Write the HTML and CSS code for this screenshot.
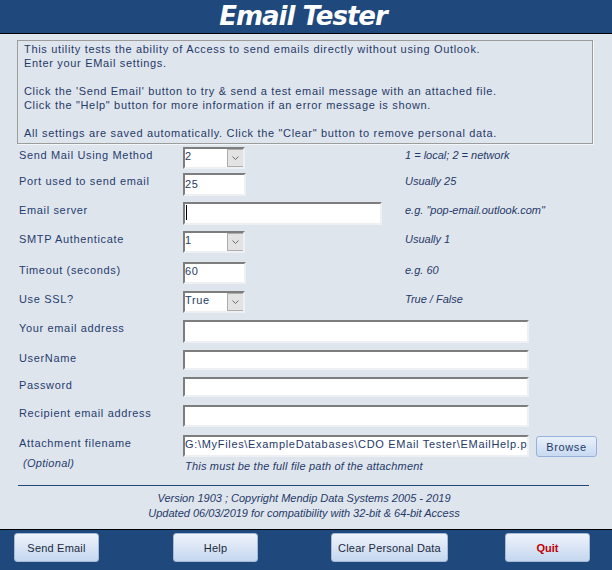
FILE: index.html
```html
<!DOCTYPE html>
<html>
<head>
<meta charset="utf-8">
<title>Email Tester</title>
<link rel="stylesheet" href="styles.css">
</head>
<body>
<div class="win">
  <header class="hdr"><h1 class="title">Email Tester</h1></header>
  <main class="main">
    <div class="info">
      <div class="ln">This utility tests the ability of Access to send emails directly without using Outlook.</div>
      <div class="ln">Enter your EMail settings.</div>
      <div class="ln blank"></div>
      <div class="ln">Click the 'Send Email' button to try &amp; send a test email message with an attached file.</div>
      <div class="ln">Click the "Help" button for more information if an error message is shown.</div>
      <div class="ln blank"></div>
      <div class="ln">All settings are saved automatically. Click the "Clear" button to remove personal data.</div>
    </div>

    <div class="form">
      <div class="lbl">Send Mail Using Method</div>
      <div class="box combo h22"><span class="val">2</span><span class="arrow"><svg width="7" height="4" viewBox="0 0 7 4"><polyline points="0.5,0.5 3.5,3.5 6.5,0.5" fill="none" stroke="#6b6b6b" stroke-width="1"/></svg></span></div>
      <div class="hint">1 = local; 2 = network</div>

      <div class="lbl">Port used to send email</div>
      <div class="box short h23"><span class="val v2">25</span></div>
      <div class="hint">Usually 25</div>

      <div class="lbl">Email server</div>
      <div class="box mid h23"><span class="caret"></span></div>
      <div class="hint">e.g. "pop-email.outlook.com"</div>

      <div class="lbl">SMTP Authenticate</div>
      <div class="box combo h22"><span class="val">1</span><span class="arrow"><svg width="7" height="4" viewBox="0 0 7 4"><polyline points="0.5,0.5 3.5,3.5 6.5,0.5" fill="none" stroke="#6b6b6b" stroke-width="1"/></svg></span></div>
      <div class="hint">Usually 1</div>

      <div class="lbl">Timeout (seconds)</div>
      <div class="box short h22"><span class="val">60</span></div>
      <div class="hint">e.g. 60</div>

      <div class="lbl">Use SSL?</div>
      <div class="box combo h22"><span class="val">True</span><span class="arrow"><svg width="7" height="4" viewBox="0 0 7 4"><polyline points="0.5,0.5 3.5,3.5 6.5,0.5" fill="none" stroke="#6b6b6b" stroke-width="1"/></svg></span></div>
      <div class="hint">True / False</div>

      <div class="lbl">Your email address</div>
      <div class="box long h23"></div>

      <div class="lbl">UserName</div>
      <div class="box long h20"></div>

      <div class="lbl">Password</div>
      <div class="box long h20"></div>

      <div class="lbl">Recipient email address</div>
      <div class="box long h22"></div>

      <div class="lbl">Attachment filename<div class="opt">(Optional)</div></div>
      <div class="attach">
        <div class="attrow">
          <div class="box long h22"><span class="val path">G:\MyFiles\ExampleDatabases\CDO EMail Tester\EMailHelp.p</span></div>
          <button class="browse">Browse</button>
        </div>
        <div class="attnote">This must be the full file path of the attachment</div>
      </div>
    </div>

    <div class="sep"></div>
    <div class="ver">
      <div>Version 1903 ; Copyright Mendip Data Systems 2005 - 2019</div>
      <div>Updated 06/03/2019 for compatibility with 32-bit &amp; 64-bit Access</div>
    </div>
  </main>
  <footer class="ftr">
    <button class="btn">Send Email</button>
    <button class="btn help">Help</button>
    <button class="btn clear">Clear Personal Data</button>
    <button class="btn quit">Quit</button>
  </footer>
</div>
</body>
</html>
```
FILE: styles.css
```css
html, body {
  margin: 0;
  padding: 0;
  background: #dfe5ed;
}
.win {
  width: 612px;
  height: 570px;
  display: flex;
  flex-direction: column;
  font-family: "Liberation Sans", Arial, sans-serif;
  font-size: 11px;
  color: #1f3a68;
  overflow: hidden;
}
.hdr {
  height: 33px;
  flex: none;
  background: #1f497c;
  border-bottom: 1px solid #000;
  display: flex;
  justify-content: center;
  align-items: center;
  padding-right: 6px;
}
.title {
  margin: 0;
  font-family: "DejaVu Sans", Verdana, sans-serif;
  font-weight: bold;
  font-style: italic;
  font-size: 26px;
  letter-spacing: -1px;
  line-height: 33px;
  color: #fff;
}
.main {
  height: 495px;
  flex: none;
  background: #dfe5ed;
  display: flex;
  flex-direction: column;
}
.info {
  margin: 6px 0 0 17px;
  width: 576px;
  height: 104px;
  box-sizing: border-box;
  border: 1px solid #9c9c9c;
  box-shadow: 1px 1px 0 #f4f6f9;
  padding: 1px 6px;
  line-height: 14px;
  letter-spacing: 0.67px;
  white-space: nowrap;
}
.ln.blank { height: 14px; }

.form {
  margin: 3px 0 0 19px;
  display: grid;
  grid-template-columns: 164px 222px 1fr;
  grid-template-rows: 26px 29px 29px 31px 29px 29px 30px 27px 28px 30px auto;
}
.lbl {
  line-height: 16px;
  letter-spacing: 0.65px;
  align-self: start;
  color: #1f3d6d;
}
.opt {
  margin: 4px 0 0 4px;
  font-style: italic;
  letter-spacing: 0.3px;
}
.hint {
  line-height: 16px;
  font-style: italic;
  align-self: start;
}
.box {
  box-sizing: border-box;
  background: #fff;
  border-style: solid;
  border-width: 2px;
  border-color: #7d7d7d #eef0f3 #eef0f3 #7d7d7d;
  white-space: nowrap;
  overflow: hidden;
  align-self: start;
  display: flex;
  align-items: flex-start;
  letter-spacing: 0.65px;
  color: #1f3a68;
}
.val {
  line-height: 14px;
}
.path { letter-spacing: 0.68px; }
.v2 { padding-top: 2px; }
.h20 { height: 20px; }
.h22 { height: 22px; }
.h23 { height: 23px; }
.short { width: 63px; }
.combo { width: 62px; }
.mid { width: 199px; }
.long { width: 346px; flex: none; }
.combo .val { flex: 1; }
.arrow {
  width: 17px;
  height: 18px;
  box-sizing: border-box;
  border: 1px solid #adadad;
  background: #e3e3e3;
  display: flex;
  align-items: center;
  justify-content: center;
  margin-right: -1px;
}
.caret {
  width: 1px;
  height: 15px;
  margin: 1px 0 0 1px;
  background: #000;
}
.attach {
  grid-column: 2 / 4;
  align-self: start;
}
.form > .long { grid-column: 2 / 4; }
.attrow {
  display: flex;
  align-items: flex-start;
}
.browse {
  margin: 1px 0 0 7px;
  width: 61px;
  height: 21px;
  padding: 0;
  border: 1px solid #95b3da;
  border-radius: 3px;
  background: linear-gradient(#e9f0fa, #c8daf1);
  font-family: "Liberation Sans", Arial, sans-serif;
  font-size: 11px;
  letter-spacing: 0.6px;
  color: #1f3a68;
}
.attnote {
  margin-top: 1px;
  padding-left: 2px;
  line-height: 16px;
  font-style: italic;
  letter-spacing: 0.2px;
}
.sep {
  margin: 11px 0 0 18px;
  width: 571px;
  border-top: 1px solid #1f497c;
}
.ver {
  margin-top: 5px;
  text-align: center;
  font-style: italic;
  line-height: 15px;
  padding-right: 4px;
}
.ftr {
  height: 40px;
  flex: none;
  background: #1f497c;
  border-top: 1px solid #000;
  display: flex;
  align-items: flex-start;
  padding: 3px 0 0 14px;
}
.btn {
  width: 85px;
  height: 29px;
  flex: none;
  padding: 0;
  border: 1px solid #a7b9d4;
  border-radius: 3px;
  background: linear-gradient(#eef3fb, #c5d7ef);
  font-family: "Liberation Sans", Arial, sans-serif;
  font-size: 11px;
  letter-spacing: 0.2px;
  color: #1c2a40;
}
.help { margin-left: 74px; }
.clear { margin-left: 73px; width: 117px; }
.quit {
  margin-left: 57px;
  color: #c00000;
  font-weight: bold;
  letter-spacing: 0;
}
```
